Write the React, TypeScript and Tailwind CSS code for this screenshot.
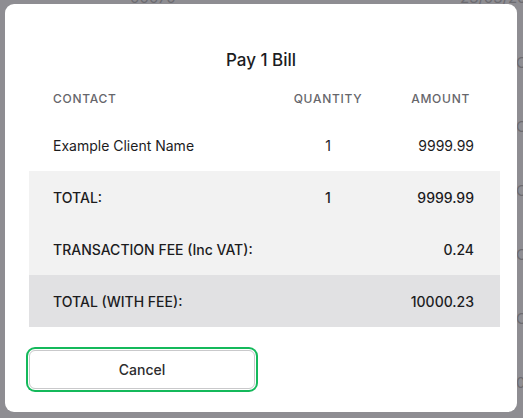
import React from "react";

type Row = { label: string; qty?: string; amount: string; tone: "white" | "light" | "dark"; strong?: boolean };

const rows: Row[] = [
  { label: "Example Client Name", qty: "1", amount: "9999.99", tone: "white" },
  { label: "TOTAL:", qty: "1", amount: "9999.99", tone: "light", strong: true },
  { label: "TRANSACTION FEE (Inc VAT):", amount: "0.24", tone: "light", strong: true },
  { label: "TOTAL (WITH FEE):", amount: "10000.23", tone: "dark", strong: true },
];

const toneClass = {
  white: "bg-white",
  light: "bg-[#f2f2f2]",
  dark: "bg-[#e1e1e3]",
};

const PayBillModal: React.FC = () => {
  return (
    <div className="w-[512px] h-[408px] bg-white rounded-[9px] pt-[44px] pl-[24px] pr-[17px] relative z-10">
      <h2 className="-ml-[7px] h-[24px] leading-[24px] text-center text-[17px] font-medium text-[#1c1c1e]">Pay 1 Bill</h2>

      <div className="mt-[7px]">
        <div className="flex items-center h-[40px] pl-[24px] pr-[26px] text-[12px] font-medium tracking-[0.06em] text-[#66666b]">
          <div className="flex-1">CONTACT</div>
          <div className="w-[100px] text-center">QUANTITY</div>
          <div className="w-[96px] text-right pr-[4px]">AMOUNT</div>
        </div>
        {rows.map((row) => (
          <div
            key={row.label}
            className={`flex items-center h-[52px] pl-[24px] pr-[26px] text-[14px] text-[#1c1c1e] ${toneClass[row.tone]} ${row.strong ? "font-medium" : "font-normal"}`}
          >
            <div className="flex-1">{row.label}</div>
            <div className="w-[100px] text-center">{row.qty}</div>
            <div className="w-[96px] text-right">{row.amount}</div>
          </div>
        ))}
      </div>

      <button
        type="button"
        className="mt-[23px] w-[226px] h-[39px] rounded-[6px] border border-[#c9c9cb] bg-white text-[14px] font-medium text-[#2c2c2e] ring-2 ring-[#14b95b] ring-offset-1 ring-offset-white"
      >
        Cancel
      </button>
    </div>
  );
};

export default function App() {
  return (
    <div
      className="w-[523px] h-[418px] bg-[#8e8d92] overflow-hidden relative pt-[4px] pl-[5px]"
      style={{ fontFamily: "Inter, 'Noto Sans', sans-serif" }}
    >
      {/* page behind the overlay */}
      <div className="absolute left-[130px] top-[-13px] text-[15px] text-[#6c6b70]">00070</div>
      <div className="absolute left-[460px] top-[-13px] text-[15px] text-[#6c6b70] whitespace-nowrap">23/03/2023</div>
      <div className="absolute left-[516px] top-[53px] flex flex-col gap-[44px] text-[15px] text-[#6c6b70] leading-[20px]">
        <span>C</span>
        <span>C</span>
        <span>C</span>
        <span>C</span>
        <span>C</span>
        <span>0</span>
      </div>
      <PayBillModal />
    </div>
  );
}
